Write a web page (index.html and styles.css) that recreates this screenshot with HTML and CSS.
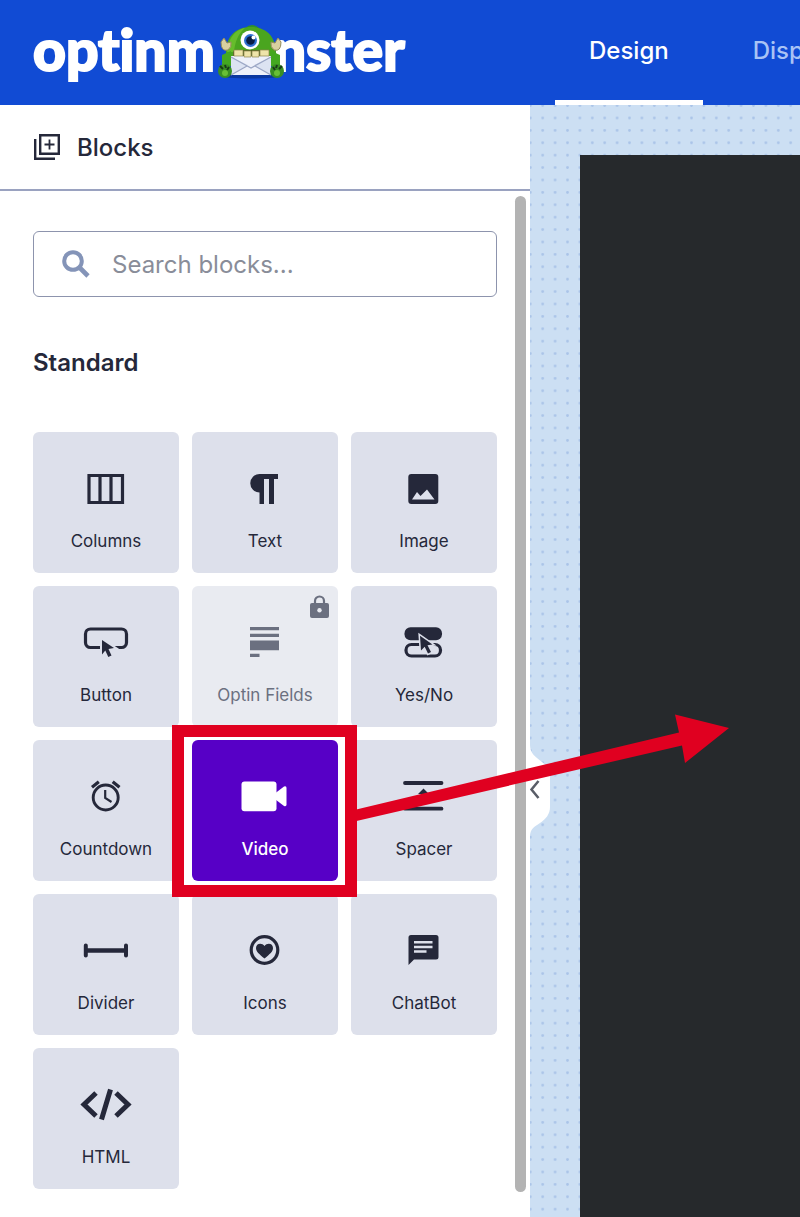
FILE: index.html
```html
<!DOCTYPE html>
<html lang="en">
<head>
<meta charset="utf-8">
<meta name="viewport" content="width=device-width, initial-scale=1">
<title>OptinMonster – Design</title>
<link rel="stylesheet" href="styles.css">
</head>
<body>
<header class="topbar">
  <a class="brand" href="#" aria-label="optinmonster">
    <span>optinm</span>
    <svg class="monster" viewBox="0 0 70 56" aria-hidden="true">
      <ellipse cx="35" cy="53" rx="30" ry="2.5" fill="#0a37a0"/>
      <path d="M29 5Q36-1 43 5L40 6Q35 3 31 6Z" fill="#2f8f2c"/>
      <path d="M10 30C10 12 21 4 35 4S60 12 60 30L64 43 6 43Z" fill="#4aa51f"/>
      <path d="M14 17C18 9 23 6 29 5 22 11 19 19 18 29L11 29Z" fill="#66bd2b"/>
      <path d="M12 27Q5 29 5 19L8 15 11 20 15 19Q16 24 12 27Z" fill="#d8d0a0" stroke="#938b5c"/>
      <path d="M58 27Q65 29 65 19L62 15 59 20 55 19Q54 24 58 27Z" fill="#d8d0a0" stroke="#938b5c"/>
      <path d="M6 32L15 28 16 43 6 42Z M64 32L55 28 54 43 64 42Z" fill="#43a820"/>
      <rect x="17" y="27" width="36" height="8" rx="3" fill="#4b621e"/>
      <rect x="15" y="33" width="40" height="19" fill="#eef1fa"/>
      <path d="M15 34L32 42 15 52ZM55 34L38 42 55 52Z" fill="#dce3f2"/>
      <path d="M15 34L35 45 55 34M15 52L31 43M55 52L39 43" fill="none" stroke="#9ca7c5" stroke-width="1.3"/>
      <path d="M18 27h9v6h-9zM28 28h7v6h-7zM36 28h7v6h-7zM44 27h9v6h-9z" fill="#eee4aa" stroke="#8e844f" stroke-width=".7"/>
      <circle cx="34" cy="17" r="9.5" fill="#fff"/>
      <circle cx="34.500" cy="17.500" r="6.500" fill="#2c6fd0"/>
      <circle cx="34.500" cy="17.500" r="4.300" fill="#081d46"/>
      <circle cx="37.500" cy="14.500" r="2" fill="#fff"/>
      <circle cx="9" cy="48" r="7" fill="#398f22"/><circle cx="61" cy="48" r="7" fill="#398f22"/>
      <path d="M4 43l3 3M9 42l1 3M13 44l-2 3M57 44l2 3M61 42l-1 3M66 43l-3 3" stroke="#173b18" stroke-width="2"/>
      <circle cx="9" cy="50" r="3" fill="#68bf35"/><circle cx="61" cy="50" r="3" fill="#68bf35"/>
    </svg>
    <span>nster</span>
  </a>
  <nav class="tabs" aria-label="Campaign steps">
    <a class="tab tab-active" href="#" aria-current="page">Design</a>
    <a class="tab" href="#">Display Rules</a>
  </nav>
</header>

<div class="workspace">
  <aside class="sidebar">
    <div class="panel-title">
      <svg class="blocks-icon" viewBox="0 0 26 26" aria-hidden="true"><path d="M6.200 1.200H24.800V19.800H6.200ZM1.200 5V24.800H21" fill="none" stroke="currentColor" stroke-width="2.400"/><path d="M15.500 5.500v10M10.500 10.500h10" stroke="currentColor" stroke-width="1.800"/></svg>
      <h1>Blocks</h1>
    </div>
    <div class="panel-body">
      <div class="panel-content">
        <label class="search">
          <svg class="search-icon" viewBox="0 0 28 28" aria-hidden="true"><circle cx="11" cy="11" r="8.800" fill="none" stroke="currentColor" stroke-width="4"/><path d="M17.500 17.500L26 26" stroke="currentColor" stroke-width="4.600"/></svg>
          <input type="text" placeholder="Search blocks..." aria-label="Search blocks">
        </label>
        <h2>Standard</h2>
        <div class="grid">
          <button class="tile" type="button">
            <svg class="icon" viewBox="0 0 56 42" aria-hidden="true"><path d="M11 7.500H44.500V34.500H11ZM22 7V35M33 7V35" fill="none" stroke="currentColor" stroke-width="3.200"/></svg>
            <span>Columns</span>
          </button>
          <button class="tile" type="button">
            <svg class="icon" viewBox="0 0 56 42" aria-hidden="true"><path d="M22.500 6H41v5H37V36H32V11H27V36H22.500V24.500A9.200 9.200 0 0 1 22.500 6Z" fill="currentColor"/></svg>
            <span>Text</span>
          </button>
          <button class="tile" type="button">
            <svg class="icon" viewBox="0 0 56 42" aria-hidden="true"><rect x="12.300" y="6" width="30" height="30" rx="3" fill="currentColor"/><path d="M16 31.500L21 24 24.500 28 31 21.500 38.500 31.500Z" fill="#dde0eb"/></svg>
            <span>Image</span>
          </button>
          <button class="tile" type="button">
            <svg class="icon" viewBox="0 0 56 42" aria-hidden="true"><rect x="7.500" y="7" width="41" height="18.500" rx="5" fill="none" stroke="currentColor" stroke-width="3.200"/><path d="M24 18L36 26 30.500 27 33.500 33.500 30.300 35 27.300 28.500 24 32.500Z" fill="currentColor" stroke="#dde0eb" stroke-width="4" paint-order="stroke"/></svg>
            <span>Button</span>
          </button>
          <button class="tile tile-locked" type="button" disabled>
            <svg class="lock" viewBox="0 0 19 23" aria-hidden="true"><path d="M5 9V6a4.500 4.500 0 0 1 9 0v3" fill="none" stroke="currentColor" stroke-width="2.200"/><rect y="8" width="19" height="15" rx="2" fill="currentColor"/><circle cx="9.500" cy="15.300" r="2.200" fill="#e9ebf1"/></svg>
            <svg class="icon" viewBox="0 0 56 42" aria-hidden="true"><path d="M13 5h29v3.200H13zM13 11.700h29v3.200H13zM13 18.500h29v9.800H13zM13 31.700h9.500v3.200H13z" fill="currentColor"/></svg>
            <span>Optin Fields</span>
          </button>
          <button class="tile" type="button">
            <svg class="icon" viewBox="0 0 56 42" aria-hidden="true"><rect x="8.500" y="5.300" width="37.500" height="13" rx="6" fill="currentColor"/><rect x="10" y="22.500" width="34.500" height="11.500" rx="5.500" fill="none" stroke="currentColor" stroke-width="3.200"/><path d="M24 13.700L36.500 22.500 31.500 23.200 35 30 32 31.500 28.700 24.800 25 28.500Z" fill="currentColor" stroke="#dde0eb" stroke-width="3" paint-order="stroke"/></svg>
            <span>Yes/No</span>
          </button>
          <button class="tile" type="button">
            <svg class="icon" viewBox="0 0 56 42" aria-hidden="true"><g fill="none" stroke="currentColor"><circle cx="27.700" cy="21.500" r="12.500" stroke-width="2.900"/><path d="M14 11.300L20.800 5.800M41.500 11.300L34.700 5.800" stroke-width="3.200"/><path d="M27.200 14V22L33.500 26" stroke-width="2.200"/></g></svg>
            <span>Countdown</span>
          </button>
          <button class="tile tile-selected" type="button">
            <svg class="icon" viewBox="0 0 56 42" aria-hidden="true"><rect x="4.500" y="5.500" width="35" height="29.800" rx="3" fill="currentColor"/><path d="M38.500 17L47 10.500Q49.500 9.500 49.500 12V28.500Q49.500 31 47 30L38.500 23.500Z" fill="currentColor"/></svg>
            <span>Video</span>
            <svg class="drag-arrow" viewBox="340 700 400 130" aria-hidden="true"><path d="M350 811L679 732.500 675 714.500 729 728 685 763 682 745.500 350 822.500Z" fill="#e00020"/></svg>
          </button>
          <button class="tile" type="button">
            <svg class="icon" viewBox="0 0 56 42" aria-hidden="true"><path d="M9 7H45.500M9 32.700H45.500" stroke="currentColor" stroke-width="3.800" stroke-linecap="round"/><path d="M27.500 12.500L33 18H29.500V22H33L27.500 27.500 22 22H25.500V18H22Z" fill="currentColor"/></svg>
            <span>Spacer</span>
          </button>
          <button class="tile" type="button">
            <svg class="icon" viewBox="0 0 56 42" aria-hidden="true"><path d="M8 20.500H48" stroke="currentColor" stroke-width="4.500"/><path d="M7.800 15.500V25.500M48 15.500V25.500" stroke="currentColor" stroke-width="4" stroke-linecap="round"/></svg>
            <span>Divider</span>
          </button>
          <button class="tile" type="button">
            <svg class="icon" viewBox="0 0 56 42" aria-hidden="true"><circle cx="27.500" cy="20" r="13.300" fill="none" stroke="currentColor" stroke-width="3.200"/><path d="M27.500 28.500C22 24 19 21.500 19 18 19 13 25 12.500 27.500 16 30 12.500 36 13 36 18 36 21.500 33 24 27.500 28.500Z" fill="currentColor"/></svg>
            <span>Icons</span>
          </button>
          <button class="tile" type="button">
            <svg class="icon" viewBox="0 0 56 42" aria-hidden="true"><path d="M15 5H40Q42.500 5 42.500 7.500V27Q42.500 29.500 40 29.500H18L12.500 35V7.500Q12.500 5 15 5Z" fill="currentColor"/><path d="M18 12.300H36.500M18 17H36.500M18 21.500H30.500" stroke="#dde0eb" stroke-width="2.400"/></svg>
            <span>ChatBot</span>
          </button>
          <button class="tile" type="button">
            <svg class="icon" viewBox="0 0 56 42" aria-hidden="true"><path d="M18 9L6 20.500 18 32M38 9L50 20.500 38 32M32.500 5.500L23.500 35.500" fill="none" stroke="currentColor" stroke-width="5"/></svg>
            <span>HTML</span>
          </button>
        </div>
      </div>
      <div class="scroll-thumb"></div>
    </div>
    <button class="collapse" type="button" aria-label="Collapse sidebar">
      <svg viewBox="0 0 24 92" aria-hidden="true"><path d="M0 0H4C4 9 10 12 16 17 21 21 24 25 24 32V62C24 69 20 74 14 78 8 82 4 84 4 92H0Z" fill="#fff"/><path d="M12.500 36L5.500 44.500 12.500 53" fill="none" stroke="#595d67" stroke-width="2.500"/></svg>
    </button>
  </aside>
  <main class="canvas">
    <svg class="dots" aria-hidden="true"><defs><pattern id="dot" x="6.500" y="6.800" width="12.400" height="12.400" patternUnits="userSpaceOnUse"><circle cx="6.200" cy="6.200" r="1.400" fill="#aac4e8"/></pattern></defs><rect width="100%" height="100%" fill="url(#dot)"/></svg>
    <div class="stage"></div>
  </main>
</div>
</body>
</html>
```

FILE: styles.css
```css
* { box-sizing: border-box; }

body {
  margin: 0;
  min-height: 100vh;
  display: flex;
  flex-direction: column;
  overflow-x: hidden;
  background: #fff;
  color: #25283a;
  font-family: Inter, "Noto Sans", sans-serif;
}

h1, h2 { margin: 0; }
svg { display: block; flex: none; }
button { font: inherit; color: inherit; border: 0; cursor: pointer; }

.topbar {
  height: 105px;
  display: flex;
  background: #114bd4;
  overflow: hidden;
}

.brand {
  flex: none;
  width: 555px;
  padding: 0 0 8px 33px;
  display: flex;
  align-items: center;
  color: #fff;
  font: 900 57px/96px Lato, sans-serif;
  font-variant-ligatures: none;
  -webkit-text-stroke: 2px #fff;
  text-decoration: none;
}

.monster {
  width: 70px;
  height: 56px;
  margin: 4px -12px 0 1px;
  position: relative;
}

.tabs { display: flex; gap: 16px; }

.tab {
  display: flex;
  align-items: center;
  padding: 0 34px;
  border-bottom: 5px solid transparent;
  color: #a9c3f5;
  font-size: 24px;
  font-weight: 500;
  white-space: nowrap;
  text-decoration: none;
}

.tab-active { color: #fff; border-color: #fff; }

.workspace { flex: 1; display: flex; }

.sidebar {
  position: relative;
  z-index: 1;
  flex: none;
  width: 530px;
  display: flex;
  flex-direction: column;
  background: #fff;
}

.panel-title {
  height: 86px;
  padding-left: 34px;
  display: flex;
  align-items: center;
  gap: 17px;
  border-bottom: 2px solid #9aa2c0;
}

.panel-title h1 { font-size: 24px; font-weight: 500; }
.blocks-icon { width: 26px; height: 26px; }

.panel-body { flex: 1; display: flex; gap: 18px; }
.panel-content { flex: 1; min-width: 0; padding: 40px 0 28px 33px; }

.scroll-thumb {
  flex: none;
  width: 11px;
  margin: 5px 4px 25px 0;
  border-radius: 6px;
  background: #b3b3b3;
}

.search {
  height: 66px;
  padding: 0 28px;
  display: flex;
  align-items: center;
  gap: 22px;
  border: 1px solid #8d94ad;
  border-radius: 6px;
}

.search-icon { width: 28px; height: 28px; color: #8494b8; }

.search input {
  flex: 1;
  min-width: 0;
  padding: 0;
  border: 0;
  outline: 0;
  background: transparent;
  font: inherit;
  font-size: 24px;
}

.search input::placeholder { color: #898d99; opacity: 1; }

.panel-content h2 {
  margin: 50px 0 53px;
  font-size: 24px;
  line-height: 32px;
  font-weight: 600;
}

.grid {
  display: grid;
  grid-template-columns: repeat(3, 1fr);
  gap: 13px;
}

.tile {
  position: relative;
  padding: 36px 0 20px;
  display: flex;
  flex-direction: column;
  align-items: center;
  gap: 19px;
  border-radius: 6px;
  background: #dde0eb;
  font-size: 17px;
  line-height: 24px;
}

.icon { width: 56px; height: 42px; }

.tile-locked { background: #e9ebf1; color: #6b7080; cursor: default; }
.lock { position: absolute; top: 9px; right: 9px; width: 19px; height: 23px; }

.tile-selected {
  z-index: 1;
  background: #5700c6;
  color: #fff;
  font-weight: 500;
}

/* White surround and red frame around the selected block */
.tile-selected::before {
  content: "";
  position: absolute;
  inset: -15px -19px -16px -20px;
  border: 12px solid #e00020;
  box-shadow: inset 0 0 0 10px #fff;
  pointer-events: none;
}

.tile-selected::after {
  content: "";
  position: absolute;
  z-index: 0;
  inset: 0;
  border-radius: 6px;
  background: #5700c6;
}

.tile-selected > .icon,
.tile-selected > span { position: relative; z-index: 1; }

.drag-arrow {
  position: absolute;
  z-index: 2;
  top: -40px;
  left: 148px;
  width: 400px;
  height: 130px;
  pointer-events: none;
}

.collapse {
  position: absolute;
  top: 640px;
  right: -20px;
  padding: 0;
  background: transparent;
}

.collapse svg { width: 24px; height: 92px; }

.canvas {
  position: relative;
  flex: 1;
  min-width: 0;
  padding: 50px 0 0 50px;
  display: flex;
  background: #ccdff3;
}

.dots { position: absolute; inset: 0; width: 100%; height: 100%; }

.stage { position: relative; flex: 1; background: #26292c; }
```
